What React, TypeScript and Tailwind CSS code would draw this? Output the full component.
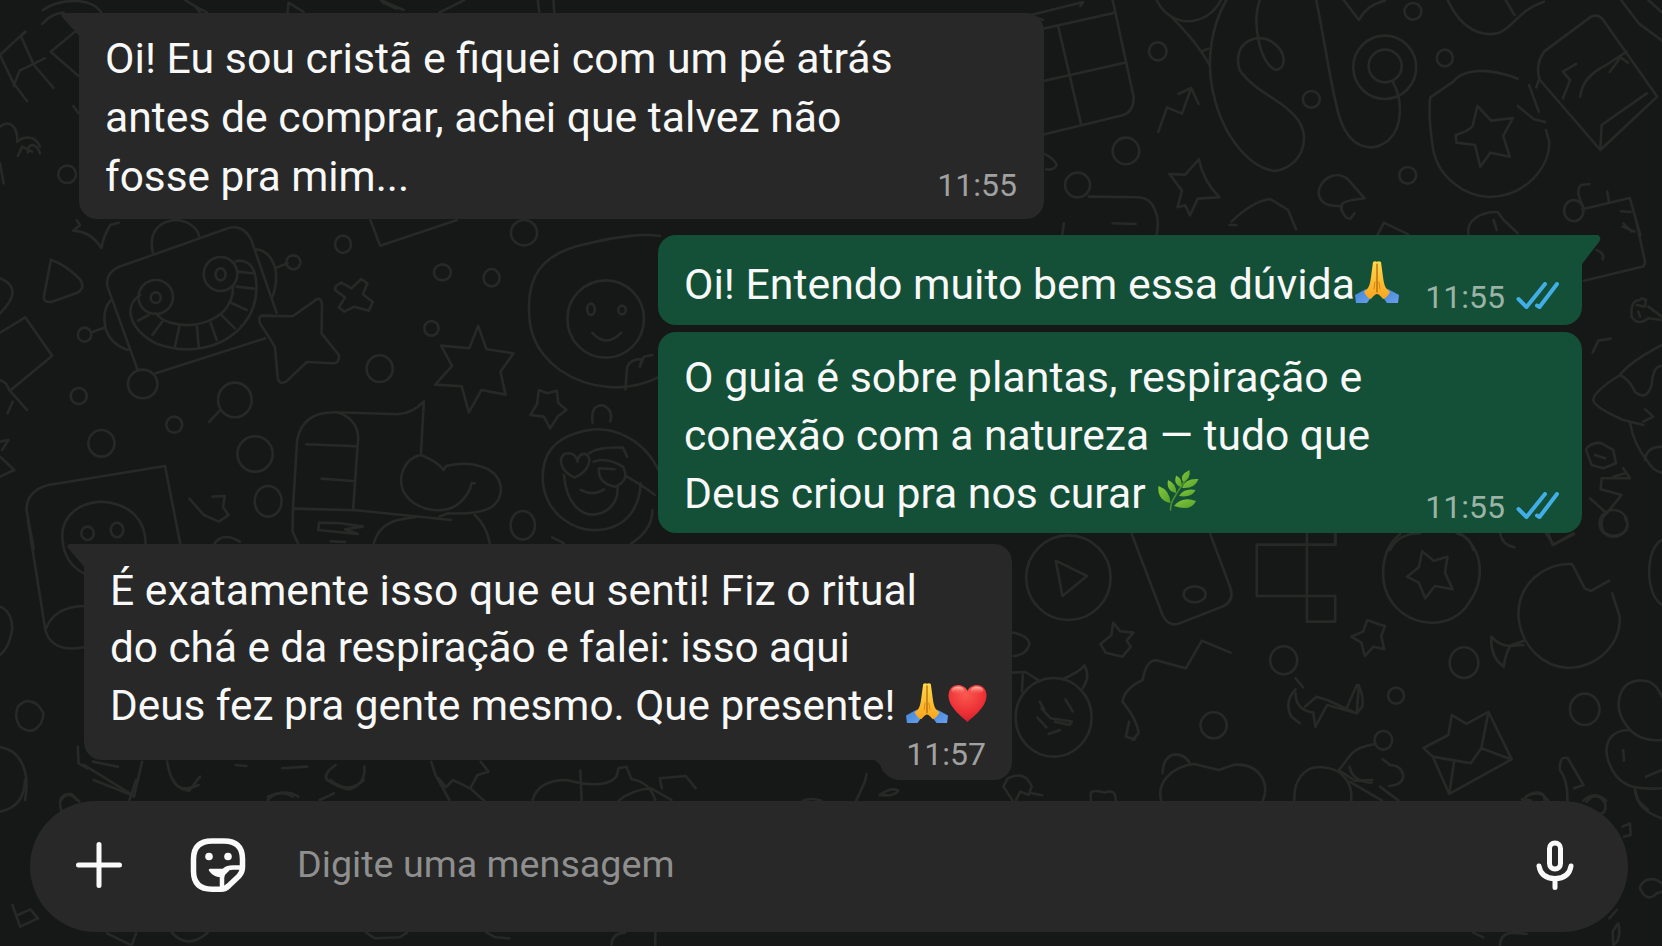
import type { ReactNode } from "react";

type Doodle = {
  x: number;
  y: number;
  sx: number;
  rings: number[][];
  paths: string[];
};

// Each patch is drawn in its own units: sx horizontally, a third of a pixel vertically.
// rings are [cx, cy, rx, ry]
const DOODLES: Doodle[] = [
  {
    x: 0,
    y: 0,
    sx: 0.3571,
    rings: [[188, 523, 25, 26]],
    paths: [
      "M120 30C160 0 250-15 284 38",
      "M118 72C135 50 155 40 178 38",
      "M518 0L548 20L560 38M548 20L580 38M805 38L808 8L850 36",
      "M1066 0L1130 30M1072 8L1110 26M1230 38L1300 0M1506 0L1510 36M1550 0L1552 36",
      "M0 165L70 95M0 165L38 250L76 304M38 258L55 212L125 175M60 112L95 195L150 264M56 110L72 96",
      "M210 95L142 155L220 228M205 318L220 340",
      "M0 380C30 355 50 385 48 425C62 412 96 400 112 440M112 460C100 425 75 430 78 458M50 468L62 440L90 455M0 490L10 550",
    ],
  },
  {
    x: 0,
    y: 220,
    sx: 0.4209,
    rings: [
      [815, 73, 19, 26],
      [1051, 157, 20, 24],
      [1168, 173, 19, 26],
      [1245, 38, 31, 38],
      [697, 127, 17, 21],
      [201, 344, 16, 21],
      [370, 231, 41, 51],
      [370, 233, 12, 16],
      [524, 162, 40, 51],
      [524, 163, 12, 18],
      [339, 492, 35, 43],
      [187, 528, 19, 24],
      [558, 540, 40, 52],
      [414, 614, 19, 24],
      [241, 670, 31, 40],
      [606, 702, 42, 53],
      [902, 446, 31, 40],
      [1025, 325, 17, 22],
      [1439, 297, 91, 116],
      [1404, 268, 9, 17],
      [1478, 270, 9, 13],
      [208, 940, 15, 20],
      [278, 930, 15, 22],
      [637, 844, 32, 46],
      [1242, 916, 29, 43],
    ],
    paths: [
      "M182 0L190 15L174 32Q215 34 241 84Q245 50 262 15L282 8",
      "M0 175Q60 205 0 280",
      "M121 119L104 232Q104 248 122 246L184 218Q204 202 190 178Q158 135 121 119",
      "M363 98C350 25 390 0 420 0C455 5 470 30 473 48",
      "M327 450L256 202Q248 162 280 142L545 23Q580 15 597 60L657 278M370 460L630 355",
      "M264 240Q240 270 252 330Q265 375 304 390M221 335L248 323M608 88Q640 90 654 145Q660 190 647 230M657 143L683 130",
      "M333 225C290 260 310 330 370 370C440 405 530 390 580 310C620 250 615 150 590 130Q575 118 560 124M370 280C400 330 500 330 540 260Q555 230 553 200",
      "M328 302L353 285M362 345L385 305M415 383L426 320M472 380L468 320M515 360L500 308M558 325L525 284M586 270L545 246M603 206L562 200M600 160L566 155",
      "M622 287L695 289L752 238Q764 232 765 255L764 340L805 405Q808 430 790 430L729 426L680 485Q663 495 660 475L653 380L618 310Q612 290 622 287",
      "M880 0L903 77L1086 0",
      "M798 198L811 188L835 205L858 177L873 190L862 223L886 246L876 272L842 260L818 275L805 262L820 232L796 210Z",
      "M1136 318L1115 385L1048 377L1074 438L1034 494L1097 499L1114 577L1144 510L1201 524L1189 455L1220 400L1156 388Z",
      "M1568 48C1530 40 1460 50 1400 70C1300 95 1265 150 1258 230C1252 320 1265 390 1330 450C1400 510 1490 520 1568 470",
      "M1407 338Q1440 385 1476 338M1486 508L1490 440Q1500 415 1525 418L1520 440L1530 410L1550 405",
      "M522 572L497 606M60 292L124 407L28 508M0 338L60 292M0 480L14 490L22 510L64 570M18 580L30 545M0 665L20 660L5 690M0 710L34 750L0 770",
      "M1280 510L1300 520L1323 512L1326 548L1346 570L1326 588L1307 625L1292 590L1260 585L1276 552Z",
      "M1408 608Q1402 555 1432 556Q1458 570 1450 604",
      "M696 866L706 660C715 600 750 575 800 577L945 583Q980 580 1007 544L1000 705M800 577C840 590 855 630 850 670L839 868M728 673L846 679M764 776L838 783M700 866L846 871L1072 900M696 866L695 935L708 970",
      "M1000 705C960 715 945 770 957 810C980 875 1060 890 1095 845Q1118 815 1120 790L1128 790M1000 705Q1040 725 1054 750L1060 738C1120 720 1185 740 1190 805C1190 865 1150 885 1065 880L1044 890",
      "M888 970Q900 915 945 900L990 890M1128 885Q1155 915 1164 970",
      "M758 908L810 910L862 920L820 928L850 942L756 930ZM786 964L820 966",
      "M80 985L63 870Q63 812 115 795L392 738L428 970M150 970C140 910 170 850 240 845C310 850 345 900 346 970",
      "M450 836L484 885L520 905L543 885L530 862L534 828L505 830M510 970Q530 935 570 965",
      "M1568 760C1530 650 1450 620 1400 630C1310 650 1285 710 1290 790C1300 890 1370 935 1420 930C1490 925 1520 860 1522 790",
      "M1350 700C1325 700 1325 750 1365 773C1400 755 1410 710 1390 702Q1375 700 1372 725Q1368 700 1350 700M1400 700Q1420 680 1480 683L1490 710M1410 725Q1440 710 1480 740Q1498 780 1462 800Q1420 790 1423 745L1460 748",
      "M1340 765C1345 850 1380 885 1410 884C1450 880 1470 840 1467 800M1380 810Q1408 830 1435 808M1490 770Q1530 800 1556 825M1550 870Q1550 930 1500 970M1312 952L1340 970",
    ],
  },
  {
    x: 1030,
    y: 0,
    sx: 0.4031,
    rings: [
      [317, 154, 22, 27],
      [238, 453, 33, 40],
      [118, 555, 31, 37],
      [698, 298, 21, 25],
      [950, 34, 21, 25],
      [1029, 174, 20, 25],
      [937, 526, 21, 25],
      [880, 202, 78, 95],
      [881, 198, 41, 49],
      [1349, 632, 24, 32],
    ],
    paths: [
      "M205 0L257 290Q258 335 230 346L36 403M32 86L210 38M36 242L235 188M70 80L127 374M0 46L132 6L125 18M0 46L32 60",
      "M36 462Q60 475 66 495Q60 512 40 508",
      "M318 396L340 322L377 341L400 264L418 312M368 282L400 264",
      "M419 478L385 524L346 522L377 572L366 622L385 616L397 646L416 596L470 592Q430 545 419 478Z",
      "M146 590L270 592Q300 595 310 630Q322 660 314 705M80 705L84 670M205 670L262 672",
      "M314 0C350 90 440 80 474 0M350 50C400 110 425 150 445 195M425 155L442 146M487 0C450 80 440 170 450 250C470 400 540 500 605 513C670 505 700 420 665 360C630 300 560 280 520 210C500 130 560 95 600 125C640 160 635 205 610 210C570 190 550 70 570 0",
      "M710 0C735 150 745 250 765 340C790 450 850 460 890 420C925 380 925 300 900 245",
      "M778 0L816 60Q835 15 880 2M1036 0C1070 90 1120 110 1160 100C1200 85 1210 30 1275 5M1180 0L1202 45",
      "M1210 236C1120 195 1070 215 1050 245L993 292C990 320 992 380 998 430C1005 530 1080 590 1140 591C1230 590 1290 500 1288 425L1280 390",
      "M1110 318L1098 378Q1090 392 1056 405L1058 428L1104 435L1117 500L1142 458L1190 470L1174 408L1198 354L1144 362Z",
      "M1238 255L1262 335M1210 318L1250 358L1278 366M1262 240L1256 262",
      "M1415 450L1265 240Q1252 195 1275 155L1392 50Q1410 40 1422 60L1556 290L1415 450L1418 375L1530 280M1322 295L1340 240L1322 215L1355 192M1365 290Q1370 230 1430 195L1480 155M1438 216L1465 172L1483 188",
      "M830 595L790 540C760 505 715 540 716 580Q720 620 770 618Q780 660 795 656L805 640M830 595Q790 600 775 610L772 630",
      "M495 675L512 675M500 665Q550 605 595 597L640 630L660 688M862 705L878 668L938 703",
      "M1088 705C1080 660 1120 635 1160 636L1175 660L1210 700M1150 660L1158 690",
      "M1370 628L1488 594L1514 705M1374 625Q1350 570 1368 555L1388 552M1436 605L1432 575M1466 634L1490 636M1470 680L1500 695",
      "M1466 0L1510 70L1568 122M1534 0L1568 38",
    ],
  },
  {
    x: 1000,
    y: 520,
    sx: 0.4222,
    rings: [
      [162, 173, 100, 127],
      [461, 223, 26, 24],
      [672, 421, 32, 42],
      [506, 616, 31, 39],
      [938, 527, 19, 24],
      [1099, 428, 34, 46],
      [1385, 568, 35, 47],
      [127, 592, 90, 118],
      [908, 661, 21, 28],
      [1453, 10, 33, 40],
    ],
    paths: [
      "M132 122L206 168L148 228Z",
      "M312 42L385 285Q400 325 430 308L530 258Q555 240 546 205L498 42",
      "M727 42V305H794V228H608V74H795V42",
      "M948 42C900 90 895 190 930 250C975 325 1070 330 1110 250C1150 180 1145 90 1092 42",
      "M1000 94L992 142L964 170L992 188L1007 235L1030 198L1072 208L1054 158L1060 110L1027 122Z",
      "M268 308L264 345L238 372L250 398L290 410L310 380L300 362L316 338L285 334Z",
      "M870 300L860 335L832 350L856 368L864 408L885 380L910 388L903 348L912 318L895 312Z",
      "M30 338Q65 345 70 370Q65 405 32 408M30 458L60 456L95 484M54 465L52 515M148 478Q190 455 200 436Q215 470 196 504",
      "M94 545L105 570M155 538L172 574M98 565L120 595L170 605L165 615L130 605M88 592L110 622M115 642L142 630",
      "M546 398L478 362L440 445L368 420Q345 425 338 480Q295 505 290 545Q325 600 328 640L314 660M306 605L298 650L320 658",
      "M382 842C370 790 405 740 460 732L518 750L555 734C620 730 640 800 622 842M385 760C385 690 435 690 450 732",
      "M697 842C695 780 720 740 760 741C820 745 835 800 832 842",
      "M802 752L830 705Q845 680 890 672M804 752L840 782L882 780M828 740Q835 785 880 788M906 718L925 735M922 735Q950 735 955 765Q955 795 922 798M828 785L905 842M900 800L944 842",
      "M700 475L718 502M700 508Q672 545 690 590L710 610M700 520Q700 570 742 578L747 620L775 555L845 580L850 495M722 560L750 530L775 540L845 580L858 560Q862 530 850 498M845 495L820 568",
      "M1070 585L1105 612L1157 576L1212 718L1064 822L1025 710L1003 684L1062 645ZM1025 710L1115 730L1140 685L1157 576M1140 685L1210 718M1076 722L1064 822",
      "M1355 132C1290 130 1225 190 1228 290C1235 385 1290 440 1345 444C1420 440 1470 370 1468 290L1450 220M1355 132L1385 205L1400 213L1443 182",
      "M1242 362L1205 378Q1180 375 1164 350Q1160 410 1193 440Q1198 395 1210 378L1240 375",
      "M1568 60C1530 80 1525 220 1568 255M1185 42Q1190 75 1218 82M1294 42L1312 74L1360 42",
      "M1568 530C1550 480 1530 480 1510 482C1460 490 1455 570 1480 610C1500 650 1530 665 1568 660M1490 630C1440 630 1430 680 1440 720C1460 800 1500 810 1568 805M1476 690L1478 722M1530 770L1568 750M1503 805L1512 842L1535 870",
      "M1344 842Q1345 780 1326 750Q1325 705 1345 715L1382 795L1360 805",
      "M8 800L18 775Q60 750 75 800L68 825L48 815L38 840M8 800L30 842M75 820L100 826M215 842V818Q225 808 248 818Q275 805 274 842M1236 838L1258 842M1260 820Q1290 810 1290 842M1382 842Q1408 810 1436 842",
    ],
  },
  {
    x: 1330,
    y: 220,
    sx: 0.3333,
    rings: [],
    paths: [
      "M918 0L945 125Q945 140 930 142L762 182M880 10L905 35M800 90Q825 100 818 118",
      "M930 240Q900 240 905 290Q925 320 955 295L996 300M935 235L948 240L945 260L920 255M955 260L996 290M925 275L930 290",
      "M788 398L805 362L842 356",
      "M996 375Q900 425 870 465Q790 515 790 540Q790 560 880 600L940 615M870 465Q900 480 915 515Q950 545 965 495Q970 435 996 438M900 608Q910 670 950 720Q970 755 996 758M996 680Q950 680 945 720M945 568L970 590L940 605",
      "M768 690Q775 670 810 668L850 690L858 730L820 745L785 735ZM795 705L825 715",
      "M880 745L900 775L815 775L812 808L875 825L830 880L780 835M850 770L885 760M830 880Q805 900 820 935Q850 960 885 935Q900 915 885 895",
      "M180 990C200 950 240 940 270 940M380 940Q420 950 430 990M655 940L668 975L730 940M15 942V975H0",
    ],
  },
  {
    x: 380,
    y: 740,
    sx: 0.4337,
    rings: [],
    paths: [
      "M118 65L128 105L160 180M135 115L152 142L168 120L208 145L225 105L250 95L232 65M208 145L240 182",
      "M352 180Q365 120 430 120Q520 150 545 110L550 85L568 80L580 118Q620 125 635 180M462 92L465 182M550 182Q580 150 625 145L672 180M650 145L645 115L705 108L728 145",
      "M1122 102L1118 125L1098 182M1152 165Q1180 140 1195 152Q1185 170 1152 165M975 182Q995 172 1018 182",
    ],
  },
  {
    x: 0,
    y: 520,
    sx: 0.3571,
    rings: [],
    paths: [
      "M78 0L127 330M175 60Q180 130 235 160M235 258Q150 260 127 330Q145 400 235 382M0 260Q35 275 34 330Q25 385 0 405",
      "M50 560Q70 538 85 545Q105 545 122 580Q118 610 110 615Q98 634 80 632Q55 625 52 612Q40 590 50 560",
      "M0 682C60 690 85 760 70 840M218 680L220 730L245 745M235 735L370 825M398 725L375 830M468 725Q480 810 530 812L560 770M330 740L260 725M660 735L690 738M790 745L860 740",
      "M940 735Q905 760 915 780Q960 810 980 808Q1025 790 1020 740",
      "M172 840Q190 810 215 840M750 840Q780 805 820 830M895 840L935 820",
    ],
  },
  {
    x: 0,
    y: 780,
    sx: 0.4464,
    rings: [],
    paths: [
      "M56 0Q55 80 0 95M138 95Q125 40 160 42L178 65M388 0Q400 40 445 15M210 0L300 48M305 0L290 60M600 50Q640 25 668 50M740 0Q780 45 815 0",
      "M28 375L45 440L85 415L68 388L40 405M240 460L295 496L305 460M385 458Q420 510 465 458M820 458L840 475L895 472L912 458M1090 458L1110 472L1140 475M1370 496Q1370 460 1400 458M1468 496V458",
    ],
  },
  {
    x: 1440,
    y: 790,
    sx: 0.3333,
    rings: [],
    paths: [
      "M585 0Q590 60 666 85M440 35Q470 0 495 40Q500 65 485 70M548 110L570 100L572 135L552 140M248 32Q270 0 310 15L325 32",
      "M600 290Q615 260 650 270L666 280M600 295Q620 340 650 310L666 305M508 385L530 360M535 400Q545 450 520 465L518 425L530 405M100 428L130 442M180 468Q180 430 220 428L260 432",
    ],
  },
];

function Wallpaper() {
  return (
    <svg
      className="absolute inset-0"
      width="1662"
      height="946"
      fill="none"
      stroke="#272927"
      strokeWidth="2.6"
      strokeLinecap="round"
      strokeLinejoin="round"
      aria-hidden="true"
    >
      {DOODLES.map(({ x, y, sx, rings, paths }) => (
        <g key={`${x}-${y}`} transform={`translate(${x} ${y}) scale(${sx} 0.3333)`}>
          {rings.map(([cx, cy, rx, ry], i) => (
            <ellipse key={i} cx={cx} cy={cy} rx={rx} ry={ry} vectorEffect="non-scaling-stroke" />
          ))}
          {paths.map((d, i) => (
            <path key={i} d={d} vectorEffect="non-scaling-stroke" />
          ))}
        </g>
      ))}
    </svg>
  );
}

function PrayEmoji({ className }: { className: string }) {
  return (
    <svg className={className} viewBox="0 0 44 43" width="44" height="43" aria-label="🙏">
      <defs>
        <linearGradient id="hand" x1="0" y1="0" x2="0" y2="1">
          <stop offset="0" stopColor="#ffd94a" />
          <stop offset="1" stopColor="#f9a51e" />
        </linearGradient>
        <linearGradient id="cuff" x1="0" y1="0" x2="1" y2="1">
          <stop offset="0" stopColor="#3f86dc" />
          <stop offset="1" stopColor="#6c9fe8" />
        </linearGradient>
      </defs>
      <path d="M0 34L11 28L17 35L12 42H1Z" fill="url(#cuff)" />
      <path d="M44 34L33 28L27 35L32 42H43Z" fill="url(#cuff)" />
      <path d="M18 1Q20-.5 22 .8Q24-.5 26 1L28 16Q29 24 31 27L35 31Q32 37 28 38Q24 33 22 33Q20 33 16 38Q12 37 9 31L13 27Q15 24 16 16Z" fill="url(#hand)" />
      <path d="M22 3V31" stroke="#a85f0c" strokeWidth="1.2" fill="none" strokeLinecap="round" />
      <path d="M19 28L20 21M25 28L24 21" stroke="#d98413" strokeWidth="1" fill="none" strokeLinecap="round" />
    </svg>
  );
}

function HeartEmoji({ className }: { className: string }) {
  return (
    <svg className={className} viewBox="0 0 39 39" width="39" height="39" aria-label="❤️">
      <defs>
        <radialGradient id="heart" cx=".45" cy=".25" r=".8">
          <stop offset="0" stopColor="#fa5a50" />
          <stop offset=".6" stopColor="#ee3136" />
          <stop offset="1" stopColor="#cf1d2b" />
        </radialGradient>
        <linearGradient id="shine" x1="0" y1="0" x2="0" y2="1">
          <stop offset="0" stopColor="#ffc4b8" />
          <stop offset="1" stopColor="#fa5a50" stopOpacity="0" />
        </linearGradient>
      </defs>
      <path d="M19.5 38C13 32 .5 23 .5 11.500C.5 5 5 1 10 1C14.500 1 18 3.500 19.500 7C21 3.500 24.500 1 29 1C34 1 38.500 5 38.500 11.500C38.500 23 26 32 19.500 38Z" fill="url(#heart)" />
      <ellipse cx="10" cy="6.500" rx="6.500" ry="4" fill="url(#shine)" />
      <ellipse cx="29" cy="6.500" rx="6.500" ry="4" fill="url(#shine)" />
    </svg>
  );
}

function HerbEmoji({ className }: { className: string }) {
  return (
    <svg className={className} viewBox="0 0 41 41" width="41" height="41" aria-label="🌿">
      <defs>
        <linearGradient id="leaf" x1="0" y1="0" x2="1" y2="1">
          <stop offset="0" stopColor="#86c53c" />
          <stop offset="1" stopColor="#55a32a" />
        </linearGradient>
      </defs>
      <path d="M12.500 40Q12.500 33 16 28Q21 19 29 8" stroke="#4c8f2c" strokeWidth="1.600" fill="none" strokeLinecap="round" />
      <g fill="url(#leaf)">
        <path d="M.5 16Q12 20 12.500 33Q-1 30 .5 16Z" />
        <path d="M10 10Q19 14 18 23Q8 21 10 10Z" />
        <path d="M18 5.500Q25 9 23.500 17Q15 15 18 5.500Z" />
        <path d="M31.500 0Q33 9 25 12Q21 5 31.500 0Z" />
        <path d="M40.500 9Q37 19 24 18Q27 8 40.500 9Z" />
        <path d="M37.500 20Q34 28 21 26Q26 18 37.500 20Z" />
        <path d="M38 31Q33 42 16 36Q24 26 38 31Z" />
      </g>
    </svg>
  );
}

function Ticks() {
  return (
    <svg className="-mt-1 ml-[11px]" viewBox="0 0 43 27" width="43" height="27" fill="none" stroke="#41aee6" strokeWidth="4" strokeLinecap="round" strokeLinejoin="round" aria-hidden="true">
      <path d="M2.500 17L10.500 25L29 2" />
      <path d="M21 23.500L23.500 25L41 2" />
    </svg>
  );
}

function Time({ value, read = false, className }: { value: string; read?: boolean; className: string }) {
  return (
    <div className={`flex items-center text-[32px] leading-[31px] ${className}`}>
      <span>{value}</span>
      {read && <Ticks />}
    </div>
  );
}

function Line({ className = "", children }: { className?: string; children: ReactNode }) {
  return <span className={`flex items-center whitespace-pre ${className}`}>{children}</span>;
}

export default function App() {
  return (
    <main className="relative h-[946px] w-[1662px] overflow-hidden bg-[#161817] font-[Roboto,sans-serif] text-[#f7f8f7]">
      <Wallpaper />

      <div className="relative flex h-full flex-col pt-[13px]">
        <article className="relative ml-[79px] flex h-[206px] w-[965px] justify-between rounded-[18px] rounded-tl-none bg-[#272827] pt-4 pr-[27px] pl-[26px]">
          <svg className="absolute top-0 -left-[18px]" width="19" height="24" fill="#272827" aria-hidden="true">
            <path d="M3 0H19V24L1 4Q-1 0 3 0Z" />
          </svg>
          <p className="leading-[59px]">
            <Line className="text-[42.850px]">Oi! Eu sou cristã e fiquei com um pé atrás</Line>
            <Line className="text-[42.700px]">antes de comprar, achei que talvez não</Line>
            <Line className="text-[42.300px]">fosse pra mim...</Line>
          </p>
          <Time value="11:55" className="self-end pb-[18px] text-[#a0a1a0]" />
        </article>

        <article className="relative mt-4 ml-[658px] flex h-[90px] w-[924px] justify-between rounded-[18px] rounded-tr-none bg-[#144f37] pt-5 pr-[23px] pl-[26px]">
          <svg className="absolute top-0 -right-[19px]" width="20" height="30" fill="#144f37" aria-hidden="true">
            <path d="M0 0H17Q21 2 18 7L1 29H0Z" />
          </svg>
          <p className="leading-[58px]">
            <Line className="text-[42.800px]">
              Oi! Entendo muito bem essa dúvida
              <PrayEmoji className="-mt-1" />
            </Line>
          </p>
          <Time value="11:55" read className="self-end pb-3 text-[#9ab3a5]" />
        </article>

        <article className="mt-[7px] ml-[658px] flex h-[201px] w-[924px] justify-between rounded-[18px] bg-[#144f37] pt-4 pr-[23px] pl-[26px]">
          <p className="leading-[58px]">
            <Line className="text-[42.900px]">O guia é sobre plantas, respiração e</Line>
            <Line className="text-[42.600px]">conexão com a natureza — tudo que</Line>
            <Line className="text-[42.700px]">
              Deus criou pra nos curar <HerbEmoji className="-mt-1.5 ml-0.5" />
            </Line>
          </p>
          <Time value="11:55" read className="self-end pb-2.5 text-[#9ab3a5]" />
        </article>

        <article className="relative mt-[11px] ml-[84px] flex h-[236px] w-[928px] flex-col">
          <svg className="absolute top-0 -left-[17px]" width="18" height="24" fill="#272827" aria-hidden="true">
            <path d="M3 0H18V24L1 4Q-1 0 3 0Z" />
          </svg>
          <p className="h-[216px] rounded-tr-[18px] rounded-bl-[18px] bg-[#272827] pt-[17px] pl-[26px] leading-[58px]">
            <Line className="text-[42.650px]">É exatamente isso que eu senti! Fiz o ritual</Line>
            <Line className="text-[42.300px]">do chá e da respiração e falei: isso aqui</Line>
            <Line className="text-[42.300px]">
              Deus fez pra gente mesmo. Que presente! <PrayEmoji className="-mt-1.5 w-[42px]" />
              <HeartEmoji className="-mt-1.5" />
            </Line>
          </p>
          <div className="relative flex h-5 w-[132px] items-end justify-end self-end rounded-br-[18px] rounded-bl-[20px] bg-[#272827] pr-[26px]">
            <svg className="absolute top-0 -left-1.5" width="14" height="12" fill="#272827" aria-hidden="true">
              <path d="M0 0H14V12H9Q6 2 0 0Z" />
            </svg>
            <Time value="11:57" className="relative pb-2.5 text-[#a0a1a0]" />
          </div>
        </article>

        <form className="mt-[21px] ml-[30px] flex h-[131px] w-[1598px] items-center rounded-full bg-[#272827] pr-[53px] pb-[3px] pl-[45px]">
          <button type="button" aria-label="Anexar">
            <svg width="48" height="48" fill="none" stroke="#fafafa" strokeWidth="5" strokeLinecap="round">
              <path d="M24 3.500V44.500M3.500 24H44.500" />
            </svg>
          </button>
          <button type="button" className="ml-[67px]" aria-label="Figurinhas">
            <svg width="56" height="54" fill="none" stroke="#fafafa" strokeWidth="5.500" strokeLinecap="round" strokeLinejoin="round">
              <path d="M31 51.200H22Q3.500 51.200 3.500 33V21Q3.500 3 22 3H34Q52.500 3 52.500 21V29Q52.500 34 49 38L39 47.500Q35.500 51.200 31 51.200Z" />
              <path d="M52 29.500H43Q32 29.500 32 40V51" strokeWidth="4.500" />
              <path d="M20 32H38L32 38Q24 38 20 32Z" fill="#fafafa" strokeWidth="2.500" />
              <circle cx="19" cy="18.500" r="3.800" fill="#fafafa" stroke="none" />
              <circle cx="38" cy="18.500" r="3.800" fill="#fafafa" stroke="none" />
            </svg>
          </button>
          <span className="-mt-[3px] ml-[51px] text-[37.700px] leading-[58px] text-[#8e8f8e]">Digite uma mensagem</span>
          <button type="button" className="ml-auto" aria-label="Gravar áudio">
            <svg width="40" height="50" fill="none" stroke="#fafafa" strokeWidth="5" strokeLinecap="round">
              <rect x="14.500" y="3" width="11" height="26" rx="5.500" />
              <path d="M4 26Q6 38.500 20 38.500Q34 38.500 36 26M20 39V47.500" />
            </svg>
          </button>
        </form>
      </div>
    </main>
  );
}
